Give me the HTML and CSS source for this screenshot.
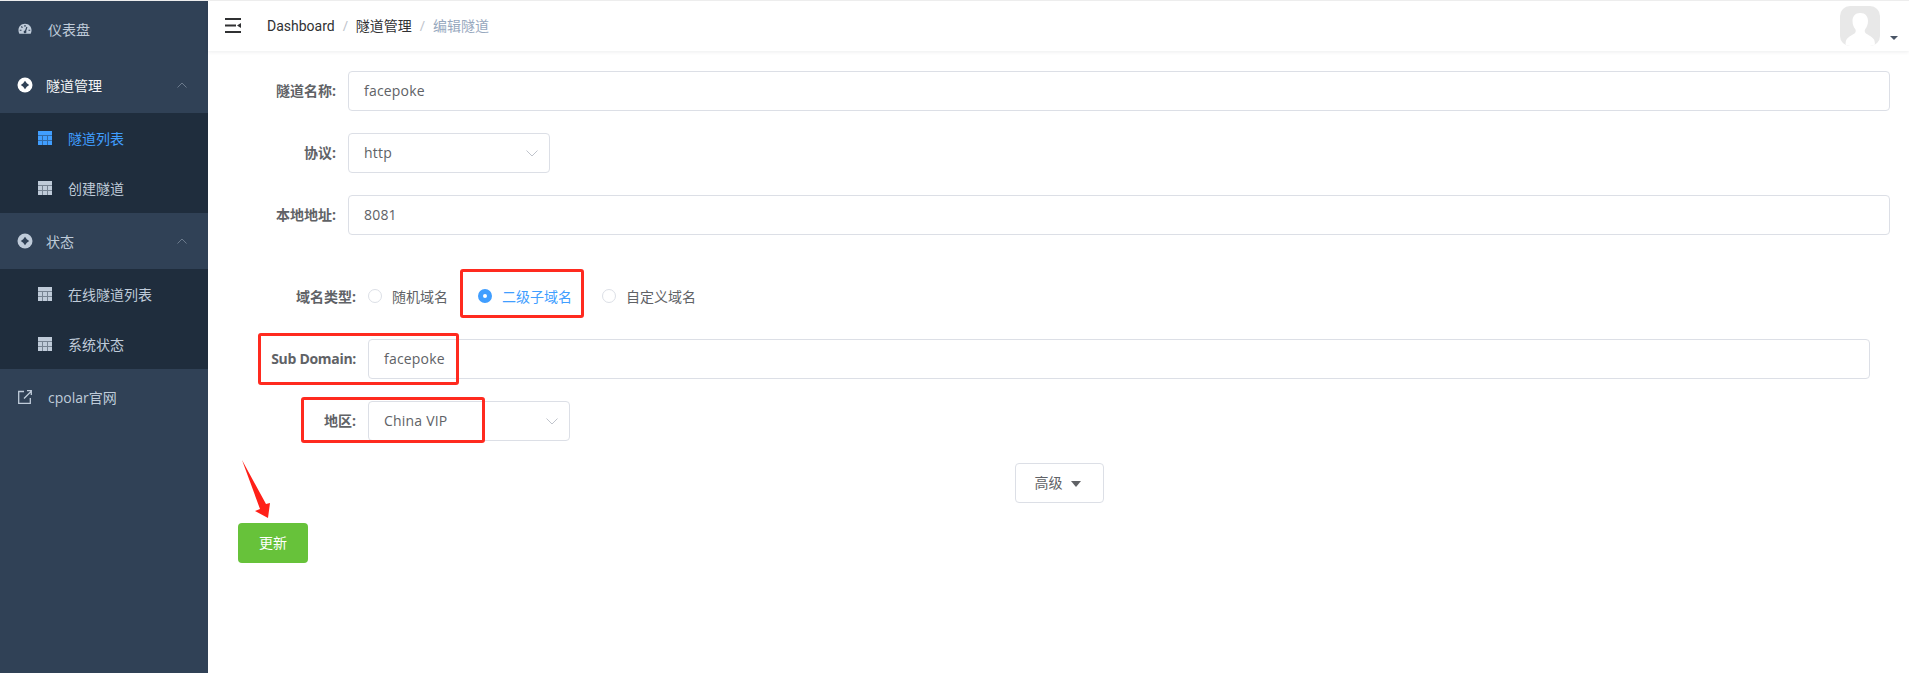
FILE: index.html
```html
<!DOCTYPE html>
<html lang="en">
<head>
  <meta charset="UTF-8">
  <title>编辑隧道</title>
  <link rel="stylesheet" href="styles.css">
</head>
<body>
  <aside class="sidebar">
    <a class="menu-item">
      <svg class="menu-icon gauge" viewBox="0 1.500 16 13"><path fill="#bfcbd9" fill-rule="evenodd" d="M8 2C3.600 2 .5 5.300 .5 9.500c0 1.500.4 2.800 1 4h13c.6-1.200 1-2.500 1-4C15.500 5.300 12.400 2 8 2zM7.300 3.500h1.400v2H7.300zM3.300 5.600l1-1 1.300 1.300-1 1zM2 8.800h2v1.300H2zM12 8.800h2v1.300h-2zM9.600 5.500l1.200.6L9.300 10.200a1.600 1.600 0 1 1-1.300-.6z"/></svg>
      <span class="menu-text">仪表盘</span>
    </a>

    <a class="menu-item menu-open">
      <svg class="menu-icon group-icon" viewBox="0 0 16 16"><circle cx="8" cy="8" r="7.500" fill="#fff"/><path fill="#304156" d="M8 3.800L9.800 6.200 12.200 8 9.800 9.800 8 12.200 6.200 9.800 3.800 8 6.200 6.200z"/></svg>
      <span class="menu-text group-text">隧道管理</span>
      <svg class="chevron" viewBox="0 0 10 6"><path d="M.5 5.500L5 1l4.500 4.500" fill="none" stroke="#6b7a8c" stroke-width="1"/></svg>
    </a>
    <div class="submenu">
      <a class="sub-item active">
        <svg class="table-icon" viewBox="0 0 14 14"><rect width="14" height="14" fill="#409eff"/><path d="M0 4.500h14M0 9.500h14M4.500 4v10M9.500 4v10" stroke="#1f2d3d" stroke-width="1" opacity=".45"/></svg>
        隧道列表
      </a>
      <a class="sub-item">
        <svg class="table-icon" viewBox="0 0 14 14"><rect width="14" height="14" fill="#bfcbd9"/><path d="M0 4.500h14M0 9.500h14M4.500 4v10M9.500 4v10" stroke="#1f2d3d" stroke-width="1" opacity=".45"/></svg>
        创建隧道
      </a>
    </div>

    <a class="menu-item">
      <svg class="menu-icon group-icon" viewBox="0 0 16 16"><circle cx="8" cy="8" r="7.500" fill="#bfcbd9"/><path fill="#304156" d="M8 3.800L9.800 6.200 12.200 8 9.800 9.800 8 12.200 6.200 9.800 3.800 8 6.200 6.200z"/></svg>
      <span class="menu-text group-text">状态</span>
      <svg class="chevron" viewBox="0 0 10 6"><path d="M.5 5.500L5 1l4.500 4.500" fill="none" stroke="#6b7a8c" stroke-width="1"/></svg>
    </a>
    <div class="submenu">
      <a class="sub-item">
        <svg class="table-icon" viewBox="0 0 14 14"><rect width="14" height="14" fill="#bfcbd9"/><path d="M0 4.500h14M0 9.500h14M4.500 4v10M9.500 4v10" stroke="#1f2d3d" stroke-width="1" opacity=".45"/></svg>
        在线隧道列表
      </a>
      <a class="sub-item">
        <svg class="table-icon" viewBox="0 0 14 14"><rect width="14" height="14" fill="#bfcbd9"/><path d="M0 4.500h14M0 9.500h14M4.500 4v10M9.500 4v10" stroke="#1f2d3d" stroke-width="1" opacity=".45"/></svg>
        系统状态
      </a>
    </div>

    <a class="menu-item">
      <svg class="menu-icon" viewBox="0 0 14 14"><path d="M6 1.500H.7v11.800h11.600V8" fill="none" stroke="#bfcbd9" stroke-width="1.300"/><path d="M6 8.500L13 1.500M9 .7h4.300V5" fill="none" stroke="#bfcbd9" stroke-width="1.300"/></svg>
      <span class="menu-text">cpolar官网</span>
    </a>
  </aside>

  <div class="main">
    <header class="navbar">
      <svg class="hamburger" viewBox="0 0 16 15"><path fill="#303133" d="M0 0h16v2H0zM0 6.500h11v2H0zM0 13h16v2H0z"/><path fill="#303133" d="M16 5v5l-4-2.500z"/></svg>
      <nav class="breadcrumb">
        <span class="crumb-en">Dashboard</span>
        <span class="sep">/</span>
        <span>隧道管理</span>
        <span class="sep">/</span>
        <span class="current">编辑隧道</span>
      </nav>
      <div class="avatar-wrap">
        <div class="avatar">
          <svg viewBox="0 0 40 40"><path fill="#fff" d="M20 7c-4.800 0-7.500 3.500-7.500 8 0 3.500 1.200 6 2.700 8 .8 1 .8 3-.2 4-1.800 1.800-6.500 3.500-8.500 6.500-.6 1-1 3-1 6.500h29.500c0-3.500-.5-5.500-1-6.500-2-3-6.700-4.700-8.500-6.500-1-1-1-3-.2-4 1.500-2 2.700-4.500 2.700-8 0-4.500-2.700-8-7.500-8z"/></svg>
        </div>
        <span class="caret"></span>
      </div>
    </header>

    <form class="form">
      <div class="row">
        <label class="label">隧道名称:</label>
        <div class="input">facepoke</div>
      </div>
      <div class="row">
        <label class="label">协议:</label>
        <div class="input select">http
          <svg class="arrow" viewBox="0 0 12 7"><path d="M.5.500L6 6l5.500-5.500" fill="none" stroke="#c0c4cc" stroke-width="1"/></svg>
        </div>
      </div>
      <div class="row">
        <label class="label">本地地址:</label>
        <div class="input">8081</div>
      </div>

      <div class="domain-group">
        <div class="row">
          <label class="label">域名类型:</label>
          <div class="radios">
            <span class="radio"><i class="dot"></i>随机域名</span>
            <span class="radio checked"><i class="dot"></i>二级子域名</span>
            <span class="radio"><i class="dot"></i>自定义域名</span>
          </div>
        </div>
        <div class="row">
          <label class="label label-en">Sub Domain:</label>
          <div class="input">facepoke</div>
        </div>
        <div class="row">
          <label class="label">地区:</label>
          <div class="input select">China VIP
            <svg class="arrow" viewBox="0 0 12 7"><path d="M.5.500L6 6l5.500-5.500" fill="none" stroke="#c0c4cc" stroke-width="1"/></svg>
          </div>
        </div>
      </div>

      <div class="advanced">
        <button type="button" class="btn">高级<span class="btn-caret"></span></button>
      </div>
      <button type="button" class="btn-save">更新</button>
    </form>
  </div>

  <!-- red marks drawn over the screenshot -->
  <div class="mark mark-radio"></div>
  <div class="mark mark-sub"></div>
  <div class="mark mark-region"></div>
  <svg class="mark-arrow" viewBox="0 0 30 60"><path fill="#ff2018" d="M1 0L25 44 29 43 27 58 14 51 19 49z"/></svg>
</body>
</html>
```

FILE: styles.css
```css
* {
  margin: 0;
  padding: 0;
  box-sizing: border-box;
}

body {
  font-family: "Open Sans", "Noto Sans CJK SC", sans-serif;
  font-size: 14px;
  color: #606266;
  background: #fff;
  min-height: 100vh;
  display: flex;
  border-top: 1px solid #ededed;
}

/* sidebar */
.sidebar {
  width: 208px;
  flex-shrink: 0;
  background: #304156;
  color: #bfcbd9;
  min-height: 672px;
}

.menu-item {
  height: 56px;
  display: flex;
  align-items: center;
  padding-left: 18px;
}

.menu-icon {
  width: 14px;
  height: 14px;
  flex-shrink: 0;
}

.gauge {
  height: 12px;
}

.group-icon {
  width: 16px;
  height: 16px;
  margin-left: -1px;
}

.menu-text {
  margin-left: 16px;
}

.group-text {
  margin-left: 13px;
}

.menu-open .group-text {
  color: #f4f4f5;
}

.chevron {
  width: 10px;
  height: 6px;
  margin-left: auto;
  margin-right: 21px;
}

.submenu {
  background: #1f2d3d;
}

.sub-item {
  height: 50px;
  display: flex;
  align-items: center;
  padding-left: 38px;
}

.sub-item.active {
  color: #409eff;
}

.table-icon {
  width: 14px;
  height: 14px;
  margin-right: 16px;
}

/* top bar */
.main {
  flex: 1;
  min-width: 0;
}

.navbar {
  height: 50px;
  display: flex;
  align-items: center;
  padding-left: 17px;
  box-shadow: 0 1px 4px rgba(0, 21, 41, 0.08);
}

.hamburger {
  width: 16px;
  height: 15px;
  margin-right: 26px;
  margin-top: -1px;
}

.breadcrumb {
  display: flex;
  align-items: baseline;
  color: #303133;
  padding-bottom: 2px;
}

.crumb-en {
  font-family: "Roboto", sans-serif;
}

.breadcrumb .sep {
  margin: 0 8px;
  color: #c0c4cc;
}

.breadcrumb .current {
  color: #97a8be;
}

.avatar-wrap {
  margin-left: auto;
  margin-right: 11px;
  display: flex;
  align-items: flex-end;
}

.avatar {
  width: 40px;
  height: 40px;
  border-radius: 10px;
  background: #e8e8e8;
  overflow: hidden;
}

.avatar svg {
  display: block;
}

.caret {
  margin: 0 0 6px 10px;
  border-top: 4px solid #4a5566;
  border-left: 4px solid transparent;
  border-right: 4px solid transparent;
}

/* form */
.form {
  padding: 20px 19px 0 20px;
}

.row {
  display: flex;
  align-items: center;
  height: 40px;
  margin-bottom: 22px;
}

.label {
  width: 120px;
  flex-shrink: 0;
  padding: 0 12px 2px 0;
  text-align: right;
  font-weight: 700;
}

.label-en {
  letter-spacing: -0.3px;
}

.input {
  flex: 1;
  height: 40px;
  line-height: 38px;
  padding: 0 15px;
  border: 1px solid #dcdfe6;
  border-radius: 4px;
  background: #fff;
  letter-spacing: 0.2px;
}

.select {
  flex: none;
  width: 202px;
  display: flex;
  align-items: center;
  justify-content: space-between;
  padding-right: 11px;
}

.arrow {
  width: 12px;
  height: 7px;
}

.domain-group {
  padding: 20px 20px 0;
}

.radios {
  display: flex;
  align-items: center;
  padding-bottom: 2px;
}

.radio {
  display: flex;
  align-items: center;
  margin-right: 30px;
}

.dot {
  width: 14px;
  height: 14px;
  margin-right: 10px;
  border: 1px solid #dcdfe6;
  border-radius: 50%;
  background: #fff;
}

.radio.checked {
  color: #409eff;
}

.radio.checked .dot {
  border: 5px solid #409eff;
}

.advanced {
  text-align: center;
  margin-bottom: 20px;
}

.btn {
  width: 89px;
  height: 40px;
  padding: 0 0 2px 19px;
  text-align: left;
  border: 1px solid #dcdfe6;
  border-radius: 4px;
  background: #fff;
  color: #606266;
  font: inherit;
}

.btn-caret {
  display: inline-block;
  margin-left: 8px;
  vertical-align: 1px;
  border-top: 6px solid #606266;
  border-left: 5px solid transparent;
  border-right: 5px solid transparent;
}

.btn-save {
  display: block;
  width: 70px;
  height: 40px;
  margin-left: 10px;
  padding-bottom: 2px;
  border: none;
  border-radius: 4px;
  background: #67c23a;
  color: #fff;
  font: inherit;
}

/* red marks */
.mark {
  position: absolute;
  border: 3px solid #ff2a1f;
  border-radius: 3px;
}

.mark-radio {
  left: 460px;
  top: 269px;
  width: 124px;
  height: 49px;
}

.mark-sub {
  left: 258px;
  top: 333px;
  width: 201px;
  height: 52px;
}

.mark-region {
  left: 301px;
  top: 397px;
  width: 184px;
  height: 46px;
}

.mark-arrow {
  position: absolute;
  left: 241px;
  top: 460px;
  width: 30px;
  height: 60px;
}
```
